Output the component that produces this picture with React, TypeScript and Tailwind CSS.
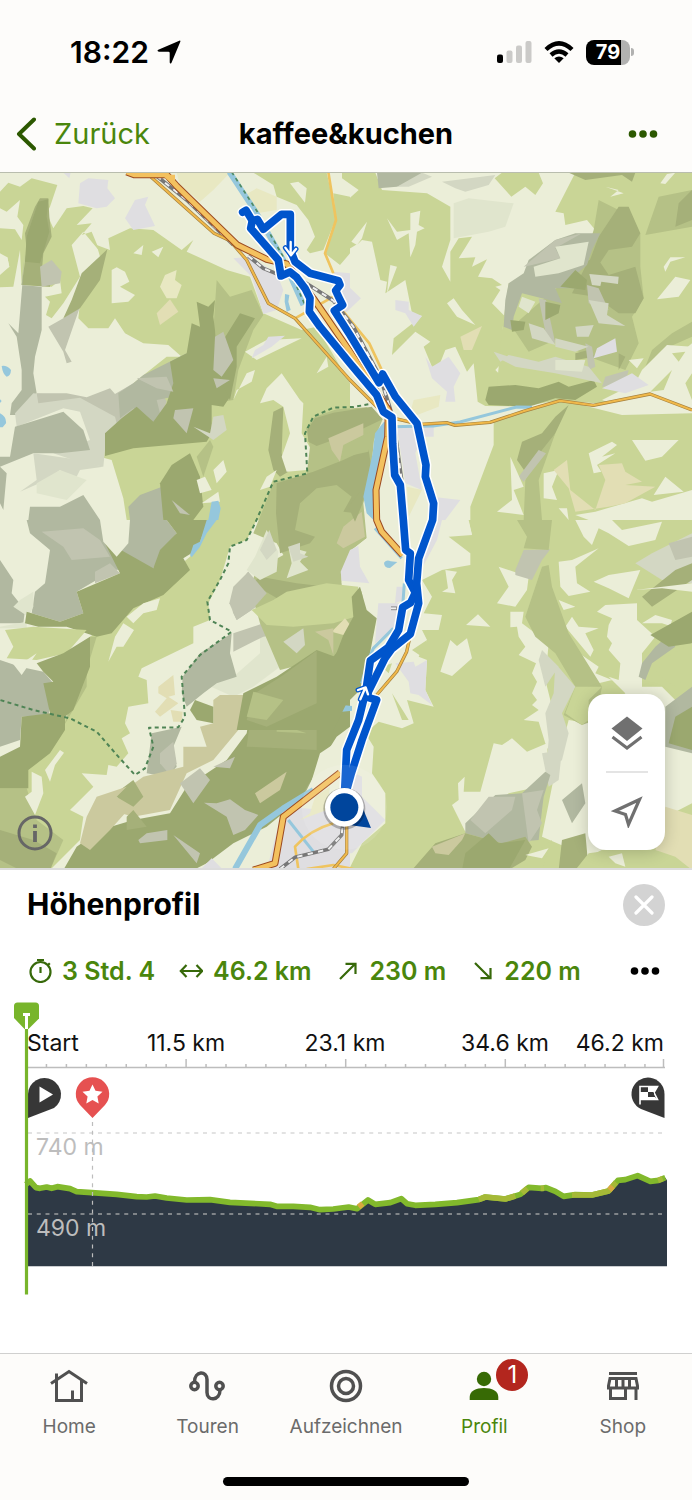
import type { ReactNode } from "react";

type Shape = [fill: string, d: string];

const C = {
  land: "#ebeed8",
  forest: "#c9d596",
  mid: "#b5c186",
  shade: "#a5b079",
  dark: "#9ba86f",
  grey: "#b1b8a0",
  lightGrey: "#c1c4b0",
  pale: "#d3d7c3",
  mist: "#e0e5cd",
  urban: "#dfdee1",
  water: "#95c7dc",
  sand: "#e2deb4",
  tan: "#cbc99e",
  field: "#e8e8c2",
};

const northWest: Shape[] = [
  [C.forest, "M0 65L25 38L60 50L95 25L172 45L150 110L140 130L160 175L200 115L250 108L278 115L230 165L275 160L245 195L275 185L300 245L250 185L215 225L240 320L190 400L155 445L138 435L150 395L135 380L185 370L180 330L155 350L65 345L60 240L40 350L0 352L0 310L28 290L22 262L0 250L0 175L45 178L65 210L70 165L52 140L60 90L20 125L0 115Z"],
  [C.forest, "M300 260L290 225L330 240L325 205L390 175L460 180L545 240L580 210L560 245L680 300L750 320L790 430L905 480L950 470L1050 640L1050 1050L380 1050L370 985L335 870L280 855L275 800L310 770L400 640L500 560L545 560L505 525L430 520L375 490L345 445L325 475L265 475L235 445L240 395L290 330Z"],
  [C.forest, "M760 8L980 8L1010 140L970 240L930 250L920 240L945 200L925 150L890 105L830 80L820 45Z"],
  [C.forest, "M1000 70L1050 80L1050 250L1020 285L975 250L1008 150Z"],
  [C.mid, "M650 330L690 380L755 360L790 435L760 480L715 600L700 690L640 700L600 560L640 480Z"],
  [C.shade, "M105 110L120 85L145 85L148 140L155 200L130 250L125 310L155 315L150 350L65 345L80 240L75 190Z"],
  [C.dark, "M115 95L145 88L140 140L148 185L120 280L75 275L80 200Z"],
  [C.lightGrey, "M120 290L155 270L185 305L180 340L125 350ZM145 470L190 445L240 410L195 540L215 575L200 580L190 545Z"],
  [C.grey, "M75 245L65 345L125 350L125 480L105 560L100 610L110 670L70 735L30 735L35 700L65 660L65 600L50 500L25 460L55 490Z"],
  [C.pale, "M100 670L240 680L400 720L370 800L320 790L310 890L220 870L160 850L270 810L240 725L190 715L50 770L45 730Z"],
  [C.lightGrey, "M110 670L200 670L260 682L330 655L345 672L400 640L480 655L500 695L470 770L400 830L360 800L345 740L240 683L115 700Z"],
  [C.grey, "M400 640L430 615L500 580L560 550L540 620L520 680L470 690L480 730L460 760L400 715L360 745L355 670Z"],
  [C.shade, "M322 238L300 330L240 415L190 445L215 390L245 310Z"],
  [C.dark, "M590 395L625 410L645 390L640 440L645 480L650 560L695 630L690 680L670 710L635 705L635 790L620 815L400 835L315 858L315 790L365 745L410 710L460 755L500 700L520 640L510 575L560 550L575 460L600 470Z"],
  [C.dark, "M720 430L765 445L710 530L710 590L690 690L660 630L690 560L670 510Z"],
  [C.lightGrey, "M645 500L670 485L700 570L665 620L640 600ZM525 720L580 715L560 790L520 745ZM640 625L690 630L650 655ZM410 625L500 620L520 665L470 655Z"],
  [C.pale, "M640 740L670 735L680 780L640 810L580 770L630 790Z"],
  [C.grey, "M30 860L45 770L190 725L250 780L270 840L180 850L100 850L0 890L0 860ZM85 1050L90 1010L180 1010L250 975L300 1050ZM385 1010L420 975L500 945L490 1050L390 1050ZM0 890L20 910L10 1020L0 1000Z"],
  [C.pale, "M100 850L240 870L310 890L240 900L220 940L180 900L140 930L60 965L110 930Z"],
  [C.mist, "M110 940L180 900L260 930L200 990L110 970Z"],
  [C.shade, "M820 725L850 710L845 850L865 905L840 920L820 900L805 840Z"],
  [C.mid, "M590 860L630 810L640 830L610 920Z"],
  [C.dark, "M490 1050L480 940L515 885L570 850L600 920L610 1010L580 1050Z"],
  [C.lightGrey, "M515 990L570 1035L540 1030Z"],
  [C.land, "M335 300L350 292L375 305L388 335L360 350L405 375L385 395L335 400ZM400 250L430 225L425 255ZM455 245L490 230L475 262ZM735 545L800 510L905 505L770 570ZM700 690L740 610L765 600L755 635L710 660ZM800 655L845 610L900 690L910 700L905 790L940 850L965 865L920 900L860 905L845 860L870 790L850 710L820 690L780 700ZM640 900L670 870L680 905L650 940ZM590 930L615 920L635 960L600 970ZM780 960L800 920L830 900L810 950ZM950 610L980 560L985 590ZM870 40L895 35L920 55L915 98ZM0 270L22 262L28 290L0 315ZM605 1000L655 965L660 995Z"],
  [C.sand, "M470 430L510 388L535 425L480 465Z"],
  [C.field, "M480 350L495 315L530 300L525 330L545 345L530 385L500 385ZM530 8L690 8L640 60L600 95L540 45ZM735 75L770 55L830 80L830 120L770 130Z"],
  [C.urban, "M240 40L265 25L325 30L322 55L345 85L320 110L290 115L235 100ZM375 145L405 90L445 80L435 105L465 168L400 180ZM700 265L750 260L830 310L850 360L830 420L790 432L755 320ZM1000 305L1050 310L1050 410L1020 400ZM755 565L765 540L790 525L805 500L855 497L815 530ZM190 8L212 8L208 25Z"],
  [C.water, "M5 588Q20 585 33 600Q32 618 20 620Q8 612 5 588ZM0 730Q20 740 18 760L8 772L0 772ZM625 1050L635 995L655 992L662 1015L655 1050ZM0 688L5 693L0 699ZM855 372L868 375L865 395L872 420L860 425L854 395Z"],
];

const northEast: Shape[] = [
  [C.forest, "M0 105L50 60L0 25L0 8L100 8L120 60L255 70L325 110L325 210L300 290L325 335L325 245L350 205L390 200L350 265L400 262L390 290L435 268L408 320L450 325L480 345L460 350L475 360L450 400L490 440L480 480L510 545L460 600L570 710L430 708L407 695L395 580L375 605L340 530L310 540L290 590L270 590L245 530L265 515L220 485L150 555L155 505L240 438L210 430L190 330L130 370L135 335L115 330L90 215L60 210L50 220L0 250Z"],
  [C.forest, "M640 125L700 8L1050 8L1050 520L850 690L760 700L650 690L570 705L460 700L480 480L500 340L700 290L760 180L735 150L670 165L665 130ZM458 25L480 8L590 8L603 40L580 75L550 50L508 80Z"],
  [C.forest, "M385 1010L455 825L455 750L570 715L660 690L840 735L1050 730L1050 1050L385 1050Z"],
  [C.grey, "M105 8L240 8L235 25L165 50L110 55Z"],
  [C.pale, "M240 8L270 20L200 50L165 50ZM300 35L460 15L440 45L370 65L340 55Z"],
  [C.mist, "M335 100L380 85L515 100L490 170L440 185L335 205Z"],
  [C.mid, "M910 195L950 80L1050 60L1050 170ZM910 590L930 540L990 490L1050 455L1050 500L960 540ZM755 180L770 90L830 120L895 190L895 290L905 385L870 440L890 520L850 600L740 560L640 510L560 545L510 470L590 400L720 290Z"],
  [C.shade, "M770 200L830 110L860 110L895 190L870 230L800 240L760 300L740 280ZM690 370L740 270L770 270L800 315L880 290L905 385L880 430L830 430L760 380ZM1000 170L1010 100L1050 60L1050 150ZM680 8L880 8L870 35L840 15L730 30Z"],
  [C.grey, "M485 470L490 390L500 340L545 310L560 270L640 210L700 190L775 190L750 240L735 285L700 315L730 330L710 355L640 355L660 400L540 370L515 440L510 480Z"],
  [C.lightGrey, "M545 290L640 210L720 190L640 235L655 265L570 285ZM590 385L612 390L640 520L615 510ZM735 345L770 355L800 420L740 400Z"],
  [C.mist, "M575 290L655 265L640 230L740 215L725 285L650 310L580 320Z"],
  [C.dark, "M655 350L700 300L735 330L730 360ZM610 395L655 405L650 430L610 450ZM505 450L550 455L545 480L510 485ZM440 650L520 645L590 655L650 635L680 650L755 630L765 650L700 690L640 685L560 710L440 705L430 690Z"],
  [C.shade, "M700 550L740 540L760 560L700 570ZM525 870L540 815L600 790L640 740L680 705L640 790L610 850L570 900L560 920ZM830 550L850 560L830 600Z"],
  [C.mid, "M600 840L640 790L590 930L600 1050L545 1050L550 930Z"],
  [C.lightGrey, "M530 920L590 840L612 850L545 935ZM790 620L860 600L850 640L780 650ZM730 520L750 530L760 590L740 600Z"],
  [C.pale, "M560 460L605 475L640 525L570 505ZM740 390L800 400L795 435L850 468L770 460ZM480 570L500 555L590 575L640 560L740 590L780 640L640 610L520 590ZM700 470L755 465L740 500L705 500ZM640 505L740 530L700 545L640 530ZM455 545L500 560L475 575Z"],
  [C.mist, "M540 380L580 395L560 430L530 410ZM640 570L730 570L720 605L640 600Z"],
  [C.land, "M900 600L940 560L975 525L1050 530L1050 695L930 670L835 710L780 690L880 640ZM860 570L905 565L885 595ZM135 145L165 185L205 180L205 130L235 122L230 165L248 175L225 185L220 225L205 262L200 190L165 210ZM28 215L75 155L60 205L45 225ZM145 285L165 290L135 370L140 320ZM315 400L335 385L360 420L400 465L345 440ZM790 50L845 70L805 80L830 60ZM955 40L975 12L1000 8L970 42ZM945 388L1000 320L1045 330L1010 380ZM965 290L985 262L1030 262L985 275L970 305Z"],
  [C.forest, "M925 665L990 600L965 660ZM990 550L1030 545L1010 575ZM1030 640L1050 610L1050 690Z"],
  [C.pale, "M742 312L830 320L828 342L778 335L775 348L750 345Z"],
  [C.land, "M740 850L810 815L825 825L780 860L820 850L765 885L778 905L755 910ZM870 810L1010 810L960 860L910 872ZM605 910L650 900L630 950L645 990L605 985ZM935 975L970 920L1025 965ZM505 860L545 950L515 960L545 1035L465 1025L510 990ZM760 1025L900 985L930 995L1050 960L1050 1050L740 1050L700 1035ZM650 1015L675 1015L680 1050ZM800 705L835 710L832 725Z"],
  [C.sand, "M355 500L420 468L390 540L365 540ZM770 885L840 880L850 905L900 935L850 945L940 950L850 1000L800 1010L700 1025L680 955L635 900L675 870L685 960L760 1020L790 930Z"],
  [C.field, "M215 690L295 675L290 710L200 745ZM195 950L240 960L200 1040Z"],
  [C.urban, "M755 565L765 535L820 505L825 545ZM780 655L870 610L920 645L850 670ZM250 560L270 590L320 560L355 610L335 650L340 695L310 695L315 665L270 625ZM160 390L200 395L200 420L240 438L215 470L190 430L160 420ZM0 310L20 320L15 345L57 385L10 430L0 430ZM165 770L275 770L275 800L240 800L220 850L240 960L190 940ZM270 980L355 990L310 1050L270 1050Z"],
];

const southWest: Shape[] = [
  [C.forest, "M270 350L400 250L570 110L620 0L770 0L740 60L690 80L660 180L625 250L630 300L580 320L580 370L425 445L415 470L440 480L445 550L385 560L375 610L390 640L365 655L385 700L350 740L325 735L320 765L245 760L280 800L210 870L250 890L240 960L150 1050L0 1050L0 800L200 590Z"],
  [C.grey, "M80 0L500 0L530 40L460 145L340 150L230 215L250 280L180 305L95 280L105 215L135 190L150 90L90 40ZM0 120L40 180L35 220L75 270L70 310L0 310ZM0 420L60 440L130 455L160 490L145 590L65 590L60 660L0 680Z"],
  [C.lightGrey, "M125 35L250 25L300 60L330 110L215 120L190 80ZM285 155L330 130L360 160L285 190Z"],
  [C.mist, "M60 240L100 215L100 260L85 290L40 260ZM0 320L80 305L80 325L0 325Z"],
  [C.dark, "M500 0L625 0L590 90L550 115L570 150L490 225L400 265L335 340L290 350L200 320L115 320L75 310L80 275L180 305L250 280L230 215L360 160L310 60L460 145L480 90L530 40Z"],
  [C.forest, "M15 330L100 320L260 330L200 400L110 420L20 415L40 380Z"],
  [C.mid, "M270 350L290 350L260 450L260 500L190 620L220 540ZM0 805L80 805L110 900L190 960L150 1050L0 1050Z"],
  [C.shade, "M0 930L100 960L170 1000L150 1050L50 1045L0 1020Z"],
  [C.dark, "M110 430L190 400L270 350L270 440L220 570L195 590L195 630L150 700L85 750L85 805L0 805L0 710L60 680L65 590L150 580L130 490L160 485L130 455Z"],
  [C.land, "M300 0L390 0L385 70L350 110L310 65ZM380 290L430 250L480 235L470 270L430 280L400 310ZM325 425L345 350L370 310L402 330L370 380L350 380ZM75 830L95 815L95 755L125 770L130 820L105 885ZM135 750L180 690L192 698L165 735L150 785ZM30 420L80 420L110 400L65 465ZM635 240L670 220L665 250L690 290L655 275Z"],
  [C.land, "M700 100L760 40L780 60L740 160L690 230L700 290L730 320L700 330L665 270Z"],
  [C.mist, "M780 265L850 340L840 440L760 500L700 530L610 490L700 470L780 400Z"],
  [C.lightGrey, "M745 155L760 190L800 240L710 300L690 260L700 190ZM700 340L790 310L850 340L790 350L700 395Z"],
  [C.dark, "M1050 390L940 400L880 440L760 520L740 640L680 720L560 800L510 880L400 900L300 930L230 980L190 1050L590 1045L700 990L800 930L920 830L960 700L1050 640Z"],
  [C.shade, "M860 465L950 395L950 600L950 690L740 680L760 530Z"],
  [C.mid, "M770 560L850 545L820 600L760 590ZM830 610L920 640L830 635Z"],
  [C.grey, "M695 340L690 400L710 470L650 490L610 520L560 560L545 520L548 470L600 400ZM455 640L545 620L520 680L530 740L500 770L440 760Z"],
  [C.lightGrey, "M480 700L520 665L530 730L510 765L480 730Z"],
  [C.tan, "M640 540L660 525L760 525L740 600L690 660L640 720L560 760L510 870L400 890L330 870L360 820L430 770L550 740L550 680L620 680L600 620L640 610ZM765 820L860 755L840 810L780 850Z"],
  [C.dark, "M585 540L640 560L640 610L590 600L570 570Z"],
  [C.shade, "M340 825L400 780L430 830L400 860ZM380 890L400 870L440 920L380 930Z"],
  [C.tan, "M260 890L290 830L380 800L350 830L375 880L330 930L270 990L240 970Z"],
  [C.sand, "M475 500L520 465L525 525L505 530L535 550L480 590L465 575L500 535L475 520ZM512 570L548 575L545 605L520 605Z"],
  [C.lightGrey, "M612 848L650 850L690 838L735 870L775 885L735 930L700 945L680 890ZM540 790L600 745L630 780L580 850ZM415 960L440 940L502 930L502 960L420 970ZM520 945L600 1000L590 1030ZM640 740L705 710L690 745Z"],
  [C.land, "M600 1045L700 970L800 920L910 830L960 730L1010 650L1050 620L1050 1050L600 1050Z"],
  [C.urban, "M600 1050L635 1015L670 1050ZM800 1050L850 860L980 870L1050 900L1050 1050Z"],
  [C.field, "M945 830L990 800L980 870L900 900L930 880Z"],
  [C.water, "M570 105L580 75L600 65L620 0L650 0L620 40L600 80L575 112Z"],
];

const southEast: Shape[] = [
  [C.forest, "M280 0L1050 0L1050 1050L20 1050L60 970L130 910L130 820L90 760L95 680L70 640L110 605L180 625L215 610L195 540L275 560L250 510L255 420L230 410L255 360L240 330L290 330L300 285L245 280L270 230L240 180L300 150L385 135L385 100L320 50L390 45L380 0Z"],
  [C.land, "M300 0L380 5L390 45ZM310 150L345 155L330 180L340 220L300 215L318 205ZM372 315L408 283L445 320ZM295 455L325 360L345 378L375 355L390 415L330 468ZM580 0L620 25L575 22ZM700 0L810 0L840 30L960 5L940 60L860 78L800 40L770 25L750 75L725 50ZM755 185L800 165L895 150L860 235L800 205ZM650 125L690 120L770 85L700 140L705 190L745 215L680 228L655 200ZM630 200L665 270L700 260L650 240ZM470 140L560 170L555 210L520 260L465 250L500 200ZM505 275L545 275L540 310L620 370L610 480L630 560L650 760L610 670L590 605L545 600L590 570L570 555L585 540L570 520L585 485L570 460L582 430L530 405L550 380L530 350L525 320L505 322ZM415 815L455 670L480 675L510 655L555 695L615 670L620 750L590 800L500 820L370 935L330 855L350 840L348 790L368 770L365 815ZM670 320L690 290L710 320L770 325L730 340L755 390L745 410ZM705 395L770 440L760 460L810 480L770 490L740 470ZM765 275L790 255L885 250L885 300L940 350L900 400L900 500L960 500L1050 590L1050 850L740 1010L600 950L640 750L680 600L740 610L850 520L800 470L830 480L835 430L800 390L810 370L795 350L800 315L810 295ZM900 310L940 285L990 300L985 318L960 310Z"],
  [C.lightGrey, "M545 90L625 88L600 120L570 180L520 165L520 150Z"],
  [C.mid, "M525 0L630 0L620 90L545 85L555 50ZM600 140L620 135L630 200L680 340L780 500L760 600L720 615L665 585L700 500L640 400L580 350L550 290Z"],
  [C.pale, "M640 430L700 500L660 580L680 640L660 720L610 770L620 660L610 580L635 520ZM600 390L650 440L610 500L590 420ZM620 800L600 700L660 690L650 780Z"],
  [C.forest, "M670 580L700 500L780 500L740 540L740 600L720 615Z"],
  [C.grey, "M370 910L460 825L540 820L610 755L625 765L605 830L600 870L590 960L480 970L370 940ZM890 470L900 430L940 380L980 345L1000 380L930 430L910 480ZM970 560L1050 500L1050 700L970 680ZM660 840L720 790L730 850L690 910Z"],
  [C.pale, "M880 130L930 100L1050 40L1050 190L960 180Z"],
  [C.lightGrey, "M385 900L440 830L520 830L510 870L430 940ZM540 820L605 810L585 870L600 910L560 970ZM980 70L1050 50L1050 110L1000 120Z"],
  [C.shade, "M210 1050L280 970L370 940L480 970L550 950L570 980L550 1020L500 1050ZM660 960L730 940L740 1050L650 1050ZM900 230L1000 150L1050 130L1050 180L930 260Z"],
  [C.tan, "M270 980L370 940L360 960L320 1005L280 1000Z"],
  [C.dark, "M370 1000L440 940L470 970L550 960L500 1050L360 1050ZM925 345L1050 275L1050 370L980 380ZM1000 590L1050 560L1050 690L980 670Z"],
  [C.forest, "M975 410L1050 370L1050 460L1000 500L940 460ZM560 1010L630 960L600 1050L540 1050ZM740 1000L960 970L1010 1050L700 1050Z"],
  [C.land, "M550 1005L620 985L600 1015ZM800 1010L840 1000L850 1040L820 1030Z"],
  [C.sand, "M970 860L1050 885L1050 1050L1000 1010L940 990Z"],
  [C.land, "M880 210L1050 190L1050 215L960 205Z"],
  [C.urban, "M160 430L215 425L220 440L255 420L250 510L270 555L230 525L205 520L200 485ZM0 740L60 770L60 830L130 900L30 1000L0 1000ZM270 0L300 0L285 60L240 145L235 120Z"],
  [C.forest, "M120 440L150 430L140 460ZM210 390L255 360L240 410ZM150 520L185 575L200 600L180 600Z"],
  [C.water, "M0 555L30 558L30 572L0 575Z"],
];

// the ridge west of the river, laid over the inner edges of the four tiles
const centre: Shape[] = [
  [C.mid, "M320 315L330 230L318 175L345 140L410 118L500 112L548 148L522 210L510 330L490 400L500 505L455 540L425 610L425 650L490 660L480 760L400 860L240 900L180 760L150 650L170 600L250 555L230 520L160 490L222 335Z"],
  [C.shade, "M230 340L340 305L430 270L505 235L515 300L500 370L470 430L430 425L455 380L410 345L350 355L300 400L285 480L345 500L330 520L240 550L228 430ZM322 180L345 145L400 128L515 110L548 148L480 180L350 228L325 215Z"],
  [C.mid, "M390 230L450 215L520 180L505 245L430 262Z"],
  [C.tan, "M385 205L490 160L490 195L430 225L420 275L395 240ZM410 520L430 470L485 425L495 500L430 535Z"],
  [C.shade, "M445 410L480 365L488 400L465 455ZM155 640L180 620L290 640L380 650L240 690Z"],
  [C.land, "M85 700L90 640L155 490L165 560L135 620L100 700L95 760ZM425 610L455 540L500 505L560 520L620 560L640 700L560 800L525 850L540 740L500 720L480 650L425 640Z"],
  [C.mist, "M165 560L200 480L235 545L230 605L180 630L140 600ZM265 530L320 545L300 575L325 600L260 625L275 580Z"],
  [C.pale, "M180 540L208 480L230 540L200 570ZM265 530L300 518L300 550L325 560L280 575Z"],
  [C.lightGrey, "M145 605L200 670L155 720L110 750L88 700L100 650Z"],
  [C.urban, "M422 605L450 540L475 528L480 590L508 640L425 632ZM535 700L610 700L580 775L525 820ZM590 650L612 650L610 690L585 700Z"],
  [C.forest, "M155 720L220 690L260 665L380 640L475 650L465 740L400 760L280 770L200 765Z"],
  [C.pale, "M250 815L310 775L315 825L290 850Z"],
  [C.sand, "M395 785L435 745L470 790L430 795Z"],
  [C.tan, "M345 785L400 775L400 855L385 810Z"],
  [C.dark, "M480 650L500 720L530 745L510 850L480 960L440 1000L400 1080L110 1080L130 970L230 920L350 840L405 860L430 795L460 740L455 680Z"],
  [C.shade, "M165 970L250 915L350 842L350 1000L200 1070L140 1050Z"],
  [C.mid, "M160 965L250 990L200 1050L140 1040Z"],
  [C.water, "M552 578Q560 568 572 574L592 576L570 594Q552 594 552 578Z"],
];

const tiles = [
  { x: 0, y: 0, shapes: northWest },
  { x: 1026, y: 0, shapes: northEast },
  { x: 0, y: 1050, shapes: southWest },
  { x: 1026, y: 1050, shapes: southEast },
  { x: 600, y: 600, shapes: centre },
];

const motorways = [
  "M380 6L402 14L500 14L530 48L712 225L800 268L860 282L940 385L1050 545L1165 720L1163 800L1128 960L1130 1050L1145 1085L1208 1155",
  "M1020 1808L850 1940L825 2080L760 2100",
];

const roads = [
  "M450 18L642 190L690 212L740 270L805 400L885 445L1050 630L1165 745",
  "M1170 742L1260 763L1340 758L1365 766L1470 757L1570 724L1680 692L1780 706L1950 672L2076 720",
  "M1230 1400L1220 1445L1190 1505L1130 1575",
  "M1040 1960L1040 2050L1000 2097",
];

const lanes = [
  "M985 6L1008 150L975 250L1000 310",
  "M885 445L1000 380",
  "M1030 425L1108 520L1150 610",
  "M1000 1960Q930 1980 885 2030L895 2097",
  "M920 2097L1000 2085L1060 2097",
];

const rails = [
  "M470 18L560 90L700 225",
  "M745 258L790 295L832 312",
  "M885 318L1000 392L1060 470L1140 620L1180 745L1205 930",
  "M840 2097L885 2062L985 2038L1025 1995L1030 1950",
  "M1173 1315L1192 1315",
];

const streams = [
  "M1170 770L1300 768L1380 756L1550 711L1596 712",
  "M1213 1240L1208 1310M1180 1375L1120 1435L1105 1470L1085 1540",
  "M865 1950L940 2045",
  "M1125 1075L1205 1165",
];

const border =
  "M1105 703L1060 711L1000 713L940 740L915 790L922 910L820 935L765 1060L740 1110L690 1130L685 1180L660 1230L622 1295L630 1350L695 1385L600 1455L545 1520L555 1640L535 1672L447 1673L460 1730L435 1795L405 1815L355 1760L290 1685L210 1645L100 1620L0 1590";

const track = [
  "M728 127L738 121L757 152L752 175L835 270L843 318L870 306L890 322L915 355L930 385L928 425L960 470L1050 580L1130 675L1150 725L1176 742L1178 820L1184 915L1201 945L1210 1050L1217 1140L1231 1150L1226 1230L1246 1268L1232 1298L1208 1312L1196 1380L1165 1432L1111 1472L1098 1560L1076 1650L1040 1740L1034 1860",
  "M757 152L772 148L790 178L845 133L871 133L871 240L885 275L930 310L1015 332L1020 345L1007 362L1018 385L1028 405L1003 422L1050 495L1137 638L1148 612L1186 680L1251 760L1278 885L1276 920L1301 1000L1298 1050L1256 1165L1250 1240L1256 1300L1231 1392L1175 1437L1155 1465L1105 1565L1103 1582L1130 1590L1086 1710L1054 1810L1040 1860",
];

function TourMap() {
  return (
    <svg viewBox="0 9 2076 2085" className="block w-full" role="img" aria-label="Karte">
      <rect y="6" width="2076" height="2091" fill={C.land} />
      {tiles.map(tile => (
        <g key={`${tile.x}-${tile.y}`} transform={`translate(${tile.x} ${tile.y})`}>
          {tile.shapes.map(([fill, d], i) => (
            <path key={i} d={d} fill={fill} />
          ))}
        </g>
      ))}

      <g fill="none" strokeLinejoin="round">
        <path d="M1152 755L1170 765L1165 800L1128 960L1130 1060L1100 1030L1090 980L1118 850L1125 790Z" fill={C.water} />
        <path d="M705 2097L780 1965L850 1915L940 1860" stroke={C.water} strokeWidth="18" />
        {streams.map(d => <path key={d} d={d} stroke={C.water} strokeWidth="9" />)}
        <path d="M688 6L770 130L850 270L910 405" stroke={C.water} strokeWidth="17" />
        <path d="M695 6L775 130L855 270L915 405" stroke="#4f8a60" strokeWidth="5" strokeDasharray="11 11" />
        <path d={border} stroke="#4f8455" strokeWidth="6" strokeDasharray="12 10" />
        {lanes.map(d => <path key={d} d={d} stroke="#efc45f" strokeWidth="8" />)}
        {rails.map(d => (
          <g key={d}>
            <path d={d} stroke="#777" strokeWidth="11" />
            <path d={d} stroke="#eee" strokeWidth="6" strokeDasharray="16 16" />
          </g>
        ))}
        {roads.map(d => (
          <g key={d}>
            <path d={d} stroke="#a5813e" strokeWidth="10" />
            <path d={d} stroke="#f0b84a" strokeWidth="6" />
          </g>
        ))}
        {motorways.map(d => (
          <g key={d}>
            <path d={d} stroke="#9c4a20" strokeWidth="21" />
            <path d={d} stroke="#f3c15f" strokeWidth="15" />
          </g>
        ))}
        <path d="M485 14H525V50Z" fill="#f3c15f" />
        {track.map(d => <path key={d} d={d} stroke="#fff" strokeWidth="32" strokeLinecap="round" />)}
        {track.map(d => <path key={d} d={d} stroke="#0055cc" strokeWidth="23" strokeLinecap="round" />)}
        {["M872 216L872 254M856 233L873 256L888 237", "M1081 1588L1096 1553M1074 1560L1097 1552L1104 1573"].map(d => (
          <g key={d} strokeLinecap="round">
            <path d={d} stroke="#0055cc" strokeWidth="15" />
            <path d={d} stroke="#fff" strokeWidth="7" />
          </g>
        ))}
      </g>

      <circle cx="1033" cy="1912" r="128" fill="#fff" opacity="0.1" />
      <path d="M1074 1880L1113 1974L1010 1960Z" fill="#00459c" />
      <circle cx="1033" cy="1916" r="63" fill="#000" opacity="0.25" />
      <circle cx="1033" cy="1912" r="58" fill="#fff" />
      <circle cx="1033" cy="1912" r="42" fill="#00459c" />
    </svg>
  );
}

const profile =
  "M78 250L90 240L108 260L120 262L140 258L155 262L172 257L210 263L230 272L275 275L350 280L410 287L440 288L465 285L500 291L560 297L630 296L690 304L810 310L830 316L880 316L930 319L960 326L1000 324L1046 318L1071 323L1104 297L1126 310L1171 305L1204 293L1221 308L1246 313L1306 310L1371 305L1436 296L1456 288L1516 294L1561 280L1586 259L1626 262L1638 260L1666 271L1691 286L1726 281L1776 282L1826 270L1854 238L1876 236L1913 224L1951 241L1976 238L1996 230";

const gentle = [
  "M1436 296L1456 288L1516 294L1546 285",
  "M1566 276L1582 262",
  "M1622 262L1632 262",
  "M1716 282L1776 282L1826 270L1848 244",
  "M1974 238L1988 233",
];

const steep = ["M1076 318L1088 308", "M1828 267L1838 256"];

const ticks = Array.from({ length: 32 }, (_, i) => i + 1);

function ElevationChart() {
  return (
    <svg viewBox="0 986 692 320" className="block w-full font-[Inter,sans-serif]" role="img" aria-label="Höhenprofil">
      <g fontSize="23" fill="#111">
        <text x="27" y="1050">Start</text>
        <text x="186" y="1050" textAnchor="middle">11.5 km</text>
        <text x="345" y="1050" textAnchor="middle">23.1 km</text>
        <text x="505" y="1050" textAnchor="middle">34.6 km</text>
        <text x="664" y="1050" textAnchor="end">46.2 km</text>
      </g>
      <g stroke="#bdbdbd" strokeWidth="1.5">
        <path d="M28 1066.5H665" />
        {ticks.map(i => {
          const x = i === 32 ? 663.5 : 26.5 + i * 19.95;
          return <path key={i} d={`M${x} 1066V${i % 8 === 0 || i === 32 ? 1058 : 1063}`} />;
        })}
      </g>

      <path d="M28 1132H664" stroke="#d9d9d9" strokeWidth="1.5" strokeDasharray="4 4.75" />
      <text x="36" y="1154" fontSize="23" fill="#bdbdbd">740 m</text>

      <g transform="translate(0 1100) scale(0.33333)">
        <path d={`${profile}L2001 238V496H84L84 250Z`} fill="#2e3945" />
        <g fill="none" strokeWidth="17" strokeLinejoin="round">
          <path d={profile} stroke="#82b92c" />
          {gentle.map(d => <path key={d} d={d} stroke="#a5b937" />)}
          {steep.map(d => <path key={d} d={d} stroke="#d8a83f" />)}
        </g>
      </g>

      <path d="M28 1213H664" stroke="#9a9d9f" strokeWidth="1.5" strokeDasharray="4 4.75" />
      <text x="36" y="1235" fontSize="23" fill="#bdbdbd">490 m</text>
      <path d="M92.5 1121V1266" stroke="#bdbdbd" strokeWidth="1.2" strokeDasharray="4 4.75" />

      {/* start, highlight and finish pins */}
      <path d="M28 1117V1093A16.5 16.5 0 1 1 54 1107Z" fill="#373737" />
      <path d="M39.5 1085.5V1101.5L53 1093.5Z" fill="#fff" />
      <path d="M92.5 1117L80 1104A16.7 16.7 0 1 1 105 1104Z" fill="#e65151" />
      <path d="M92.5 1083.5l3 6.300 7 .9-5.100 4.800 1.300 6.900-6.200-3.400-6.200 3.400 1.300-6.900-5.100-4.800 7-.9z" fill="#fff" />
      <path d="M664.5 1117V1093A16.5 16.5 0 1 0 641 1108Z" fill="#373737" />
      <path d="M640 1103.5V1085.500H657.500L654 1091.500L657.500 1098.500H640" fill="none" stroke="#fff" strokeWidth="1.6" />
      <path d="M648 1086H657L654 1091H648ZM640 1091H648V1096H655L656.500 1098H640Z" fill="#fff" />
      <path d="M648 1091.500H654V1096H648Z" fill="#373737" />

      <path d="M26.500 1028V1293.500" stroke="#78b52b" strokeWidth="3.2" />
      <path d="M14 1005q0-3.500 3.500-3.500h18q3.500 0 3.500 3.500v12.500L28.500 1028h-4L14 1017Z" fill="#78b52b" />
      <path d="M23 1013.500h7M26.500 1013.500V1028" stroke="#fff" strokeWidth="3" />
    </svg>
  );
}

function Dots({ className }: { className: string }) {
  return (
    <svg viewBox="0 0 30 10" className={className} fill="currentColor" aria-hidden="true">
      <circle cx="4.500" cy="5" r="3.800" />
      <circle cx="15" cy="5" r="3.800" />
      <circle cx="25.500" cy="5" r="3.800" />
    </svg>
  );
}

function StatIcon({ children }: { children: ReactNode }) {
  return (
    <svg viewBox="0 0 24 24" className="size-6 text-[#37690a]" fill="none" stroke="currentColor" strokeWidth="2.2" aria-hidden="true">
      {children}
    </svg>
  );
}

const stats = [
  {
    label: "3 Std. 4",
    icon: <><circle cx="12.500" cy="13" r="10" /><path d="M9 .8h7M12.500 8v6M20 6l1.800-1.800" /></>,
  },
  {
    label: "46.2 km",
    icon: <path d="M2 12h21M7.500 6L1.800 12l5.700 6M17.500 6l5.700 6-5.700 6" />,
  },
  {
    label: "230 m",
    icon: <path d="M4 20L19 5M9.500 4.800H19.500V15" />,
  },
  {
    label: "220 m",
    icon: <path d="M5 4L20 19M10.500 19.200H20.500V9" />,
  },
];

const tabs = [
  {
    label: "Home",
    icon: <path d="M2 16.500L20 4.500 38 16.500M7.500 16V6.500M7.500 13V33.500H32.500V13M23.500 33V23.500" strokeWidth="3" />,
  },
  {
    label: "Touren",
    icon: (
      <>
        <circle cx="6.500" cy="19" r="3.700" />
        <circle cx="31.500" cy="19" r="3.700" />
        <path d="M6.500 15C6.500 3.500 19 3.500 19 12.500V25.500C19 34.500 32 34 32 23" />
      </>
    ),
  },
  {
    label: "Aufzeichnen",
    icon: <><circle cx="20" cy="19" r="14.500" /><circle cx="20" cy="19" r="7.500" /></>,
  },
  {
    label: "Profil",
    active: true,
    badge: 1,
    icon: (
      <g fill="currentColor" stroke="none">
        <circle cx="20" cy="12" r="7.200" />
        <path d="M5.700 33V30C5.700 24 12 21 20 21s14.300 3 14.300 9v3Z" />
      </g>
    ),
  },
  {
    label: "Shop",
    icon: (
      <path d="M6 6.500H34M7 11.500H33L34.500 19V21H5.500V19ZM7.500 21V31.500H22.500V21M33 21V33M13.500 11V20M20 11V20M26.500 11V20" strokeWidth="3" />
    ),
  },
];

export default function App() {
  return (
    <div className="flex min-h-screen flex-col bg-white font-[Inter,sans-serif] text-black">
      <header className="border-b border-[#b9bdae] bg-[#fdfcfa]">
        <div className="flex h-[104px] items-center justify-between pr-[58px] pl-[70px]">
          <div className="flex items-center gap-2 text-[30px] font-semibold">
            <span>18:22</span>
            <svg viewBox="0 0 24 24" className="size-6" aria-hidden="true">
              <path d="M22.300 .7q1.500-.4 1 1L14.500 22.700q-1.200 1.800-1.800-.2V13q0-1.300-1.300-1.300H2Q-.6 11 1.300 9.700Z" />
            </svg>
          </div>
          <div className="flex items-center gap-3">
            <svg viewBox="0 0 35 22" className="h-[22px] w-[35px]" aria-hidden="true">
              <rect x="0" y="13.500" width="6" height="8.500" rx="2" />
              <g fill="#cbcac8">
                <rect x="9.500" y="9.500" width="6" height="12.500" rx="2" />
                <rect x="19" y="4.500" width="6" height="17.500" rx="2" />
                <rect x="28.500" y="0" width="6" height="22" rx="2" />
              </g>
            </svg>
            <svg viewBox="0 0 30 22" className="h-[22px] w-[30px]" fill="none" stroke="#000" strokeWidth="4.400" aria-hidden="true">
              <path d="M2 8.500Q15-3.800 28 8.500" />
              <path d="M7 14Q15 7 23 14" />
              <path d="M10.300 17.300Q15 13.500 19.700 17.300L15 22Z" fill="#000" stroke="none" />
            </svg>
            <div className="flex items-center gap-px">
              <div className="flex h-[25px] w-11 items-center justify-center rounded-lg bg-linear-to-r from-black from-79% to-[#b1b1b0] to-79% text-xl font-bold text-white">
                79
              </div>
              <span className="h-2 w-[3px] rounded-r-full bg-[#b1b1b0]" />
            </div>
          </div>
        </div>
        <div className="grid h-[68px] grid-cols-[1fr_auto_1fr] items-center px-4 pb-2">
          <a href="#back" className="flex items-center gap-[18px] text-[29px] text-[#4a860c]">
            <svg viewBox="0 0 20 34" className="h-[34px] w-5" fill="none" stroke="#2c5800" strokeWidth="4" strokeLinecap="round" strokeLinejoin="round" aria-hidden="true">
              <path d="M18 2.500L3 17l15 14.500" />
            </svg>
            Zurück
          </a>
          <h1 className="text-[29px] font-bold">kaffee&amp;kuchen</h1>
          <button type="button" aria-label="Mehr" className="justify-self-end px-[18px] text-[#2c5800]">
            <Dots className="h-2.5 w-[30px]" />
          </button>
        </div>
      </header>

      <main className="flex grow flex-col">
        <section className="relative border-b-2 border-[#dcdcdc]">
          <TourMap />
          <button type="button" aria-label="Info" className="absolute bottom-[17px] left-[17px] text-[#666]">
            <svg viewBox="0 0 36 36" className="size-9" fill="none" stroke="currentColor" strokeWidth="3" aria-hidden="true">
              <circle cx="18" cy="18" r="16" />
              <path d="M18 9.500v3.500M18 16v11" strokeWidth="3.800" />
            </svg>
          </button>
          <div className="absolute right-[27px] bottom-[18px] flex w-[77px] flex-col items-center rounded-[18px] bg-white text-[#707070] shadow-[0_2px_16px_rgba(0,0,0,0.2)]">
            <button type="button" aria-label="Kartenebenen" className="flex h-[77px] items-center">
              <svg viewBox="0 0 32 34" className="h-[34px] w-8" aria-hidden="true">
                <path d="M16 .5L31.500 12.500 16 25 .5 12.500Z" fill="currentColor" />
                <path d="M1.500 21L16 32l14.500-11" fill="none" stroke="currentColor" strokeWidth="3" />
              </svg>
            </button>
            <span className="h-0.5 w-[42px] bg-[#e4e4e4]" />
            <button type="button" aria-label="Mein Standort" className="flex h-[77px] items-center">
              <svg viewBox="0 0 32 32" className="size-8" fill="none" stroke="currentColor" strokeWidth="3.200" aria-hidden="true">
                <path d="M28.500 3.500L4 15 14.500 18.500 17.500 28.500Z" />
              </svg>
            </button>
          </div>
        </section>

        <section>
          <div className="flex items-center justify-between pt-3 pr-[27px] pl-[27px]">
            <h2 className="text-[30px] font-bold">Höhenprofil</h2>
            <button type="button" aria-label="Schließen" className="flex size-[42px] items-center justify-center rounded-full bg-[#d3d3d3]">
              <svg viewBox="0 0 20 20" className="size-5" stroke="#fff" strokeWidth="3.200" strokeLinecap="round" aria-hidden="true">
                <path d="M2 2l16 16M18 2L2 18" />
              </svg>
            </button>
          </div>
          <div className="flex items-center justify-between pt-7 pr-8 pl-7">
            <ul className="flex items-center gap-6">
              {stats.map(stat => (
                <li key={stat.label} className="flex items-center gap-2.5 text-[25px] leading-8 font-semibold whitespace-nowrap text-[#4a860c]">
                  <StatIcon>{stat.icon}</StatIcon>
                  {stat.label}
                </li>
              ))}
            </ul>
            <button type="button" aria-label="Weitere Werte">
              <Dots className="h-2.5 w-[30px]" />
            </button>
          </div>
          <ElevationChart />
        </section>
      </main>

      <footer className="border-t border-[#d0d0cf] bg-[#fdfcfa]">
        <nav className="grid grid-cols-5 pt-[13px]">
          {tabs.map(tab => (
            <a
              key={tab.label}
              href={`#${tab.label.toLowerCase()}`}
              className={`flex flex-col items-center gap-2 text-[19px] leading-7 ${tab.active ? "text-[#4a860c]" : "text-[#6b6b6b]"}`}
            >
              <span className="relative">
                <svg
                  viewBox="0 0 40 38"
                  className={`h-[38px] w-10 ${tab.active ? "text-[#376a05]" : "text-[#505050]"}`}
                  fill="none"
                  stroke="currentColor"
                  strokeWidth="3.500"
                  aria-hidden="true"
                >
                  {tab.icon}
                </svg>
                {tab.badge && (
                  <span className="absolute -top-2 left-8 flex size-8 items-center justify-center rounded-full bg-[#b3261e] text-2xl text-white">
                    {tab.badge}
                  </span>
                )}
              </span>
              {tab.label}
            </a>
          ))}
        </nav>
        <div className="flex justify-center pt-9 pb-[14px]">
          <span className="h-[9px] w-[246px] rounded-full bg-black" />
        </div>
      </footer>
    </div>
  );
}
